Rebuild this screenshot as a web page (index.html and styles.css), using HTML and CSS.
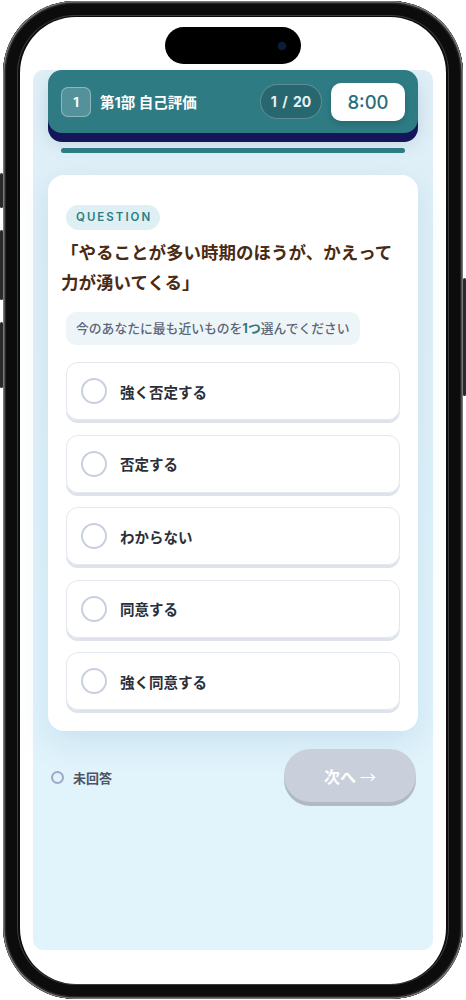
FILE: index.html
```html
<!DOCTYPE html>
<html lang="ja">
<head>
    <meta charset="UTF-8">
    <meta name="viewport" content="width=device-width, initial-scale=1.0">
    <title>第1部 自己評価</title>
    <link rel="stylesheet" href="styles.css">
</head>
<body>
    <div class="phone">
        <!-- 側面ボタン -->
        <span class="side-btn left b1"></span>
        <span class="side-btn left b2"></span>
        <span class="side-btn left b3"></span>
        <span class="side-btn right b4"></span>

        <div class="screen">
            <div class="island"><span class="cam"></span></div>

            <div class="panel">
                <!-- ヘッダー -->
                <div class="header">
                    <div class="part-no">1</div>
                    <div class="part-title">第1部 自己評価</div>
                    <div class="count">1 / 20</div>
                    <div class="timer">8:00</div>
                </div>
                <div class="progress"></div>

                <!-- 設問カード -->
                <div class="card">
                    <div class="q-label">QUESTION</div>
                    <h1 class="q-text">「やることが多い時期のほうが、かえって力が湧いてくる」</h1>
                    <div class="hint">今のあなたに最も近いものを<span class="em">1つ</span>選んでください</div>

                    <div class="options">
                        <div class="option"><span class="radio"></span>強く否定する</div>
                        <div class="option"><span class="radio"></span>否定する</div>
                        <div class="option"><span class="radio"></span>わからない</div>
                        <div class="option"><span class="radio"></span>同意する</div>
                        <div class="option"><span class="radio"></span>強く同意する</div>
                    </div>
                </div>

                <!-- フッター -->
                <div class="footer">
                    <div class="status"><span class="dot"></span>未回答</div>
                    <button class="next-btn" disabled>次へ <span class="arrow">→</span></button>
                </div>
            </div>
        </div>
    </div>
</body>
</html>
```

FILE: styles.css
```css
body {
    margin: 0;
    background: #ffffff;
    font-family: Inter, "Noto Sans CJK JP", sans-serif;
}
.phone {
    position: relative;
    width: 460px;
    height: 998px;
    margin: 1px 0 0 3px;
    padding: 16px 17px 15px;
    box-sizing: border-box;
    background: #0c0c0c;
    border-radius: 72px;
    box-shadow: inset 0 0 0 1.5px #7a7a7a, inset 0 0 0 3px #262626, inset 0 0 0 14px #0c0c0c, inset 0 0 0 15px #3a3a3a;
}
.side-btn {
    position: absolute;
    width: 3px;
    background: #2a2a2a;
    border-radius: 2px;
}
.side-btn.left { left: -3px; }
.side-btn.right { right: -3px; }
.b1 { top: 172px; height: 35px; }
.b2 { top: 229px; height: 70px; }
.b3 { top: 321px; height: 66px; }
.b4 { top: 277px; height: 118px; }

.screen {
    height: 100%;
    background: #ffffff;
    border-radius: 56px;
    padding: 0 13px 34px;
    box-sizing: border-box;
    display: flex;
    flex-direction: column;
}
.island {
    width: 136px;
    height: 37px;
    margin: 10px auto 6px;
    background: #000;
    border-radius: 19px;
    display: flex;
    align-items: center;
    justify-content: flex-end;
    padding-right: 16px;
    box-sizing: border-box;
}
.cam {
    width: 6px;
    height: 6px;
    border-radius: 50%;
    background: #0d1a3a;
    box-shadow: 0 0 0 1px #101f4a;
}
.panel {
    flex: 1;
    background: linear-gradient(#dfeff7, #e1f3fb 60%);
    border-radius: 10px;
    padding: 0 15px;
    display: flex;
    flex-direction: column;
}

/* ヘッダー */
.header {
    height: 63px;
    background: #2e7b84;
    border-radius: 14px;
    padding: 0 13px;
    display: flex;
    align-items: center;
    box-shadow: 0 9px 0 #15155a, 0 10px 18px rgba(40, 90, 120, 0.18);
    color: #fff;
    box-sizing: border-box;
}
.part-no {
    width: 30px;
    height: 30px;
    box-sizing: border-box;
    border: 1px solid rgba(255, 255, 255, 0.35);
    background: rgba(255, 255, 255, 0.18);
    border-radius: 7px;
    display: flex;
    align-items: center;
    justify-content: center;
    font-size: 13px;
    font-weight: 700;
}
.part-title {
    margin-left: 9px;
    font-size: 14.5px;
    font-weight: 700;
}
.count {
    margin-left: auto;
    width: 62px;
    height: 35px;
    box-sizing: border-box;
    border: 1px solid rgba(255, 255, 255, 0.25);
    background: #27676f;
    border-radius: 18px;
    display: flex;
    align-items: center;
    justify-content: center;
    font-size: 14px;
    font-weight: 700;
    word-spacing: 2px;
    color: #e8f1f3;
}
.timer {
    margin-left: 9px;
    width: 74px;
    height: 38px;
    background: #fff;
    border-radius: 10px;
    display: flex;
    align-items: center;
    justify-content: center;
    font-size: 18.5px;
    font-weight: 500;
    color: #2b6f78;
    box-shadow: 0 3px 6px rgba(0, 0, 0, 0.15);
}
.progress {
    margin: 15px 13px 0;
    height: 5px;
    background: #2e7b84;
    border-radius: 3px;
}

/* 設問カード */
.card {
    margin-top: 22px;
    background: #fff;
    border-radius: 16px;
    padding: 30px 18px 21px;
    box-shadow: 0 10px 30px rgba(110, 165, 200, 0.22);
}
.q-label {
    width: fit-content;
    height: 25px;
    line-height: 25px;
    padding: 0 8px 0 10px;
    background: #dff0f5;
    color: #2e7b84;
    font-size: 11.5px;
    font-weight: 600;
    letter-spacing: 2px;
    border-radius: 13px;
}
.q-text {
    margin: 8px 0 0 -5px;
    font-size: 17.5px;
    line-height: 30px;
    font-weight: 700;
    color: #4a2a12;
}
.hint {
    width: fit-content;
    margin-top: 14px;
    height: 33px;
    line-height: 33px;
    padding: 0 10px;
    background: #eef5f9;
    border-radius: 10px;
    font-size: 12.8px;
    font-weight: 500;
    color: #5b6677;
}
.hint .em {
    color: #2e7b84;
    font-weight: 700;
}
.options {
    margin-top: 17px;
    display: flex;
    flex-direction: column;
    gap: 14.6px;
}
.option {
    height: 58px;
    box-sizing: border-box;
    border: 1px solid #e3e7ee;
    border-radius: 12px;
    box-shadow: 0 3px 0 #dde2eb;
    display: flex;
    align-items: center;
    padding-left: 14px;
    font-size: 14.5px;
    font-weight: 700;
    color: #2b2f3a;
}
.radio {
    width: 26px;
    height: 26px;
    box-sizing: border-box;
    border: 2.5px solid #c9cfe0;
    border-radius: 50%;
    margin-right: 13px;
}

/* フッター */
.footer {
    margin-top: 18px;
    padding: 0 2px 0 3px;
    display: flex;
    align-items: center;
    justify-content: space-between;
}
.status {
    display: flex;
    align-items: center;
    font-size: 13px;
    font-weight: 700;
    color: #4b5563;
}
.dot {
    width: 13px;
    height: 13px;
    box-sizing: border-box;
    border: 2.5px solid #a0a6cc;
    border-radius: 50%;
    margin-right: 9px;
}
.next-btn {
    width: 132px;
    height: 53px;
    border: none;
    border-radius: 27px;
    background: #c9cfdb;
    box-shadow: 0 4px 0 #b1b8c6;
    color: #fff;
    font-family: inherit;
    font-size: 16px;
    font-weight: 700;
    margin-bottom: 4px;
}
.next-btn .arrow {
    font-family: "Noto Sans CJK JP", sans-serif;
    font-weight: 400;
}
```
